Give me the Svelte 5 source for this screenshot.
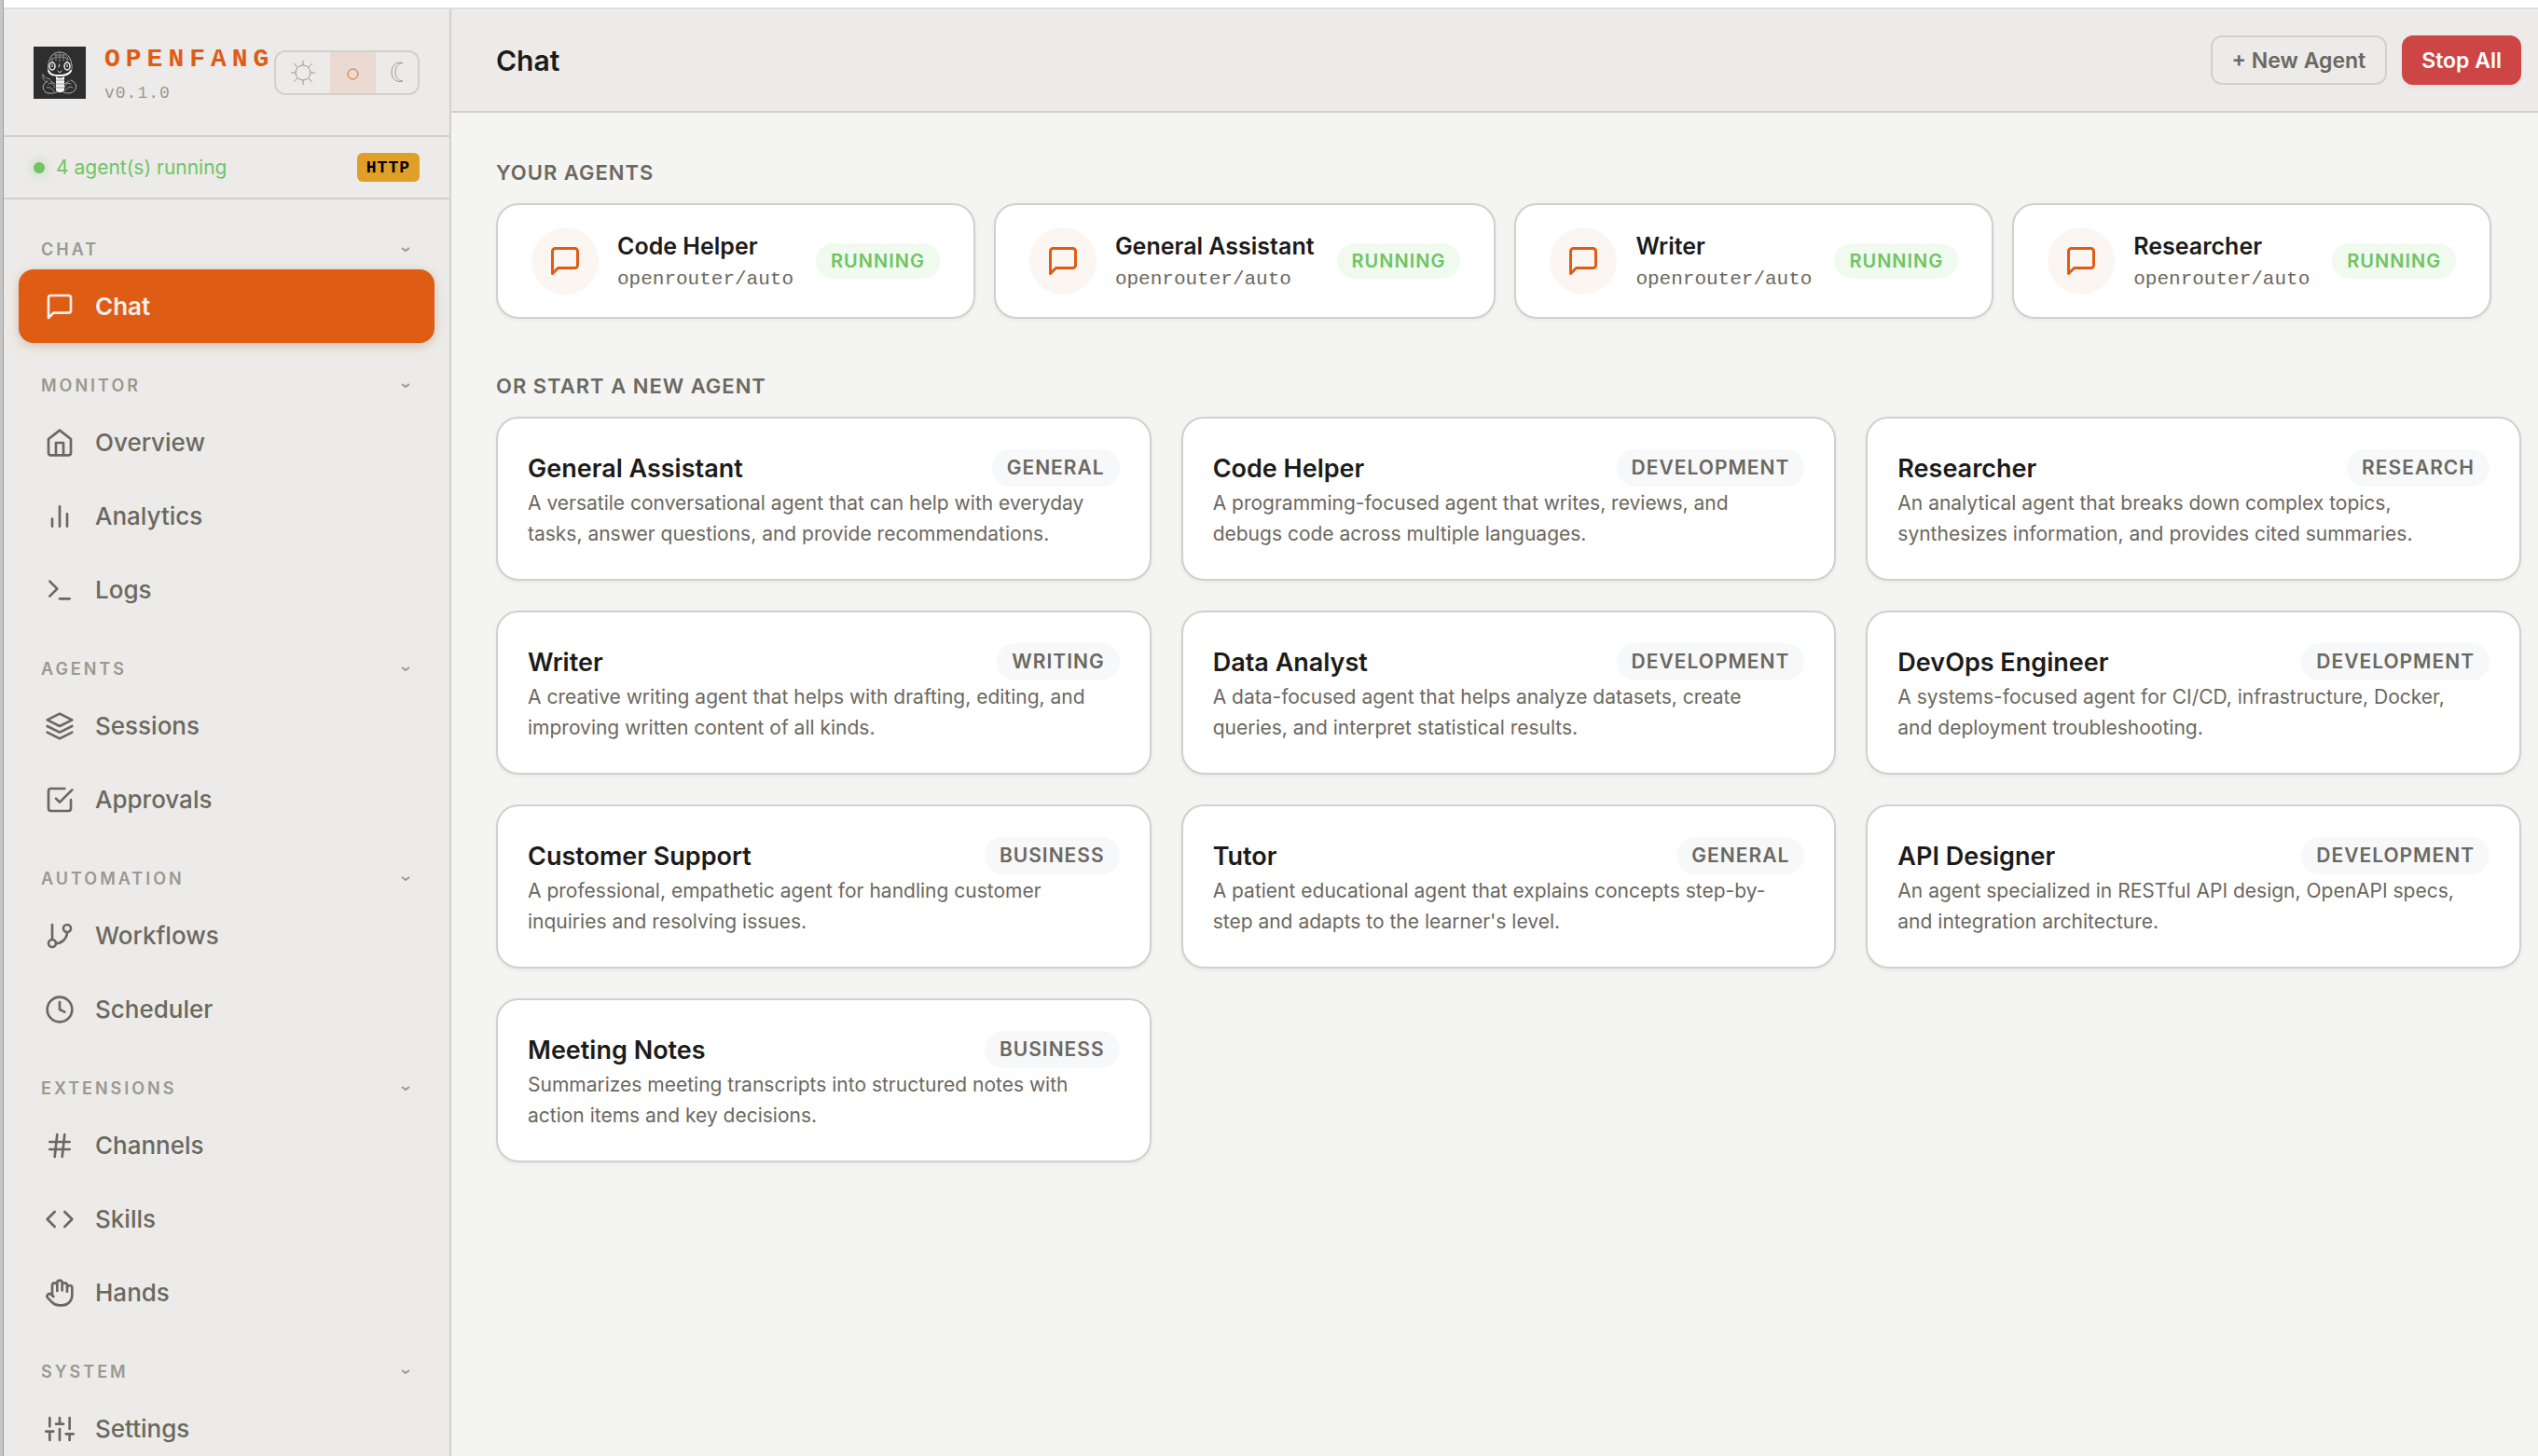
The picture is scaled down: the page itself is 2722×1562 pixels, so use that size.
<script lang="ts">
  interface NavItem {
    id: string;
    label: string;
    icon: string;
  }

  interface NavGroup {
    label: string;
    items: NavItem[];
  }

  const icons: Record<string, string> = {
    message: '<path d="M21 15a2 2 0 0 1-2 2H7l-4 4V5a2 2 0 0 1 2-2h14a2 2 0 0 1 2 2z"/>',
    home: '<path d="M3 9l9-7 9 7v11a2 2 0 0 1-2 2H5a2 2 0 0 1-2-2z"/><path d="M9 22V12h6v10"/>',
    chart: '<path d="M18 20V10M12 20V4M6 20v-6"/>',
    terminal: '<path d="M4 17l6-6-6-6M12 19h8"/>',
    layers: '<path d="M12 2L2 7l10 5 10-5-10-5z"/><path d="M2 17l10 5 10-5M2 12l10 5 10-5"/>',
    check: '<path d="M9 11l3 3L22 4"/><path d="M21 12v7a2 2 0 0 1-2 2H5a2 2 0 0 1-2-2V5a2 2 0 0 1 2-2h11"/>',
    branch: '<path d="M6 3v12"/><circle cx="18" cy="6" r="3"/><circle cx="6" cy="18" r="3"/><path d="M18 9a9 9 0 0 1-9 9"/>',
    clock: '<circle cx="12" cy="12" r="10"/><path d="M12 6v6l4 2"/>',
    hash: '<path d="M4 9h16M4 15h16M10 3L8 21M16 3l-2 18"/>',
    code: '<path d="M16 18l6-6-6-6M8 6l-6 6 6 6"/>',
    hand: '<path d="M18 11V6a2 2 0 0 0-4 0M14 10V4a2 2 0 0 0-4 0v2M10 10.5V6a2 2 0 0 0-4 0v8"/><path d="M18 8a2 2 0 1 1 4 0v6a8 8 0 0 1-8 8h-2c-2.8 0-4.5-.86-5.99-2.34l-3.6-3.6a2 2 0 0 1 2.83-2.82L7 15"/>',
    sliders: '<path d="M4 21v-7M4 10V3M12 21v-9M12 8V3M20 21v-5M20 12V3M1 14h6M9 8h6M17 16h6"/>',
  };

  const groups: NavGroup[] = [
    { label: 'Chat', items: [{ id: 'chat', label: 'Chat', icon: 'message' }] },
    {
      label: 'Monitor',
      items: [
        { id: 'overview', label: 'Overview', icon: 'home' },
        { id: 'analytics', label: 'Analytics', icon: 'chart' },
        { id: 'logs', label: 'Logs', icon: 'terminal' },
      ],
    },
    {
      label: 'Agents',
      items: [
        { id: 'sessions', label: 'Sessions', icon: 'layers' },
        { id: 'approvals', label: 'Approvals', icon: 'check' },
      ],
    },
    {
      label: 'Automation',
      items: [
        { id: 'workflows', label: 'Workflows', icon: 'branch' },
        { id: 'scheduler', label: 'Scheduler', icon: 'clock' },
      ],
    },
    {
      label: 'Extensions',
      items: [
        { id: 'channels', label: 'Channels', icon: 'hash' },
        { id: 'skills', label: 'Skills', icon: 'code' },
        { id: 'hands', label: 'Hands', icon: 'hand' },
      ],
    },
    { label: 'System', items: [{ id: 'settings', label: 'Settings', icon: 'sliders' }] },
  ];

  const agents = [
    { name: 'Code Helper', model: 'openrouter/auto' },
    { name: 'General Assistant', model: 'openrouter/auto' },
    { name: 'Writer', model: 'openrouter/auto' },
    { name: 'Researcher', model: 'openrouter/auto' },
  ];

  const templates = [
    { name: 'General Assistant', category: 'General', desc: 'A versatile conversational agent that can help with everyday tasks, answer questions, and provide recommendations.' },
    { name: 'Code Helper', category: 'Development', desc: 'A programming-focused agent that writes, reviews, and debugs code across multiple languages.' },
    { name: 'Researcher', category: 'Research', desc: 'An analytical agent that breaks down complex topics, synthesizes information, and provides cited summaries.' },
    { name: 'Writer', category: 'Writing', desc: 'A creative writing agent that helps with drafting, editing, and improving written content of all kinds.' },
    { name: 'Data Analyst', category: 'Development', desc: 'A data-focused agent that helps analyze datasets, create queries, and interpret statistical results.' },
    { name: 'DevOps Engineer', category: 'Development', desc: 'A systems-focused agent for CI/CD, infrastructure, Docker, and deployment troubleshooting.' },
    { name: 'Customer Support', category: 'Business', desc: 'A professional, empathetic agent for handling customer inquiries and resolving issues.' },
    { name: 'Tutor', category: 'General', desc: "A patient educational agent that explains concepts step-by-step and adapts to the learner's level." },
    { name: 'API Designer', category: 'Development', desc: 'An agent specialized in RESTful API design, OpenAPI specs, and integration architecture.' },
    { name: 'Meeting Notes', category: 'Business', desc: 'Summarizes meeting transcripts into structured notes with action items and key decisions.' },
  ];

  let page = $state('chat');
  let theme = $state('system');
  let collapsed = $state<Record<string, boolean>>({});

  function navigate(event: MouseEvent, id: string) {
    event.preventDefault();
    page = id;
  }
</script>

{#snippet icon(name: string)}
  <svg class="icon" viewBox="0 0 24 24" aria-hidden="true">{@html icons[name]}</svg>
{/snippet}

<div class="frame">
  <div class="shell">
    <aside class="sidebar">
      <div class="sidebar-header">
        <svg class="logo" viewBox="0 0 56 56" aria-hidden="true">
          <rect width="56" height="56" fill="#2e2e2e" />
          <g fill="none" stroke="#b4b4b4" stroke-linecap="round">
            <path d="M17 27c-3-4-1-9 0-12C19 8 23 6 28 6s10 3 12 9c1 4 2 8 0 12" />
            <path d="M19 14c4-4 15-4 19 0M24 8v7M28 7v9M32 8v7M20 12v5M36 11v6M22 9h12" stroke="#8c8c8c" />
            <path d="M15 37c-6 3-6 9-2 12 4 2 8 1 12 0M40 36c7 3 7 9 3 12-4 3-8 2-11 1" />
            <path d="M10 30c2 4 5 4 8 5M10 30c-1 5 2 7 4 8M16 40c4-2 6 1 7 4M14 44c4-1 6 1 8 4M40 40c-3-2-6 0-7 4M42 44c-3-2-6 0-8 3M18 37l5 3M38 37l-5 3" stroke="#a0a0a0" />
            <path d="M16 26c2 5 7 5 12 5s10-1 12-5" stroke="#ffffff" stroke-width="2" />
            <path d="M28 19l-1 3M26 26l2 2 2-2" stroke="#dddddd" />
          </g>
          <path d="M24 32c3 2 6 2 9 0v15c-2 3-7 3-9 0z" fill="#f4f4f4" />
          <path d="M24 36h9M24 40h9M24 44h9" stroke="#999999" />
          <g fill="#2e2e2e" stroke="#eeeeee" stroke-width="1.5">
            <ellipse cx="20" cy="21" rx="3" ry="4" />
            <ellipse cx="36" cy="21" rx="3" ry="4" />
          </g>
          <path d="M20 19v3M36 19v3" stroke="#ffffff" />
        </svg>
        <div class="brand">
          <div class="brand-name">OPENFANG</div>
          <div class="version">v0.1.0</div>
        </div>
        <div class="theme-switch" role="group" aria-label="Theme">
          <button type="button" aria-label="Light" class:active={theme === 'light'} onclick={() => (theme = 'light')}>
            <svg width="26" height="26" viewBox="0 0 26 26">
              <circle cx="13" cy="13" r="8" />
              <path d="M13 5V0M13 21v5M5 13H0M21 13h5M7 7L3 3M19 7l4-4M7 19l-4 4M19 19l4 4" />
            </svg>
          </button>
          <button type="button" aria-label="System" class:active={theme === 'system'} onclick={() => (theme = 'system')}>
            <svg width="17" height="26" viewBox="0 0 17 26"><circle cx="8.5" cy="14.5" r="5.5" /></svg>
          </button>
          <button type="button" aria-label="Dark" class:active={theme === 'dark'} onclick={() => (theme = 'dark')}>
            <svg width="13" height="26" viewBox="0 0 13 26">
              <path d="M13 2.5C6 .5 1 5.5 1 12.5S6 24 13 22C8 21.5 5 18 5 12.5S8 3 13 2.5z" />
            </svg>
          </button>
        </div>
      </div>

      <div class="status">
        <span class="status-dot"></span>
        <span class="status-text">4 agent(s) running</span>
        <span class="conn-badge">HTTP</span>
      </div>

      <nav class="nav">
        {#each groups as group}
          <div class="nav-group">
            <button
              type="button"
              class="nav-title"
              aria-expanded={!collapsed[group.label]}
              onclick={() => (collapsed[group.label] = !collapsed[group.label])}
            >
              <span>{group.label}</span>
              <svg class="chevron" viewBox="0 0 10 10" aria-hidden="true"><path d="M1 3l4 3 4-3" /></svg>
            </button>
            {#if !collapsed[group.label]}
              {#each group.items as item}
                <a
                  href="#{item.id}"
                  class="nav-item"
                  class:active={page === item.id}
                  onclick={(e) => navigate(e, item.id)}
                >
                  {@render icon(item.icon)}
                  <span>{item.label}</span>
                </a>
              {/each}
            {/if}
          </div>
        {/each}
      </nav>
    </aside>

    <main class="main">
      <header class="topbar">
        <h1>Chat</h1>
        <div class="actions">
          <button type="button" class="btn btn-ghost">+ New Agent</button>
          <button type="button" class="btn btn-danger">Stop All</button>
        </div>
      </header>

      <div class="content">
        <section>
          <h2>Your Agents</h2>
          <div class="agent-row">
            {#each agents as agent}
              <button type="button" class="agent-card">
                <span class="agent-icon">{@render icon('message')}</span>
                <span class="agent-text">
                  <span class="agent-name">{agent.name}</span>
                  <span class="agent-model">{agent.model}</span>
                </span>
                <span class="badge badge-running">Running</span>
              </button>
            {/each}
          </div>
        </section>

        <section>
          <h2>Or start a new agent</h2>
          <div class="template-grid">
            {#each templates as template}
              <button type="button" class="template-card">
                <span class="template-head">
                  <span class="template-name">{template.name}</span>
                  <span class="badge">{template.category}</span>
                </span>
                <span class="template-desc">{template.desc}</span>
              </button>
            {/each}
          </div>
        </section>
      </div>
    </main>
  </div>
</div>

<style>
  :global(body) {
    background: #f4f4f2;
  }

  .frame {
    --accent: #df5c15;
    --surface: #ecebe9;
    --line: #d1d0cd;
    --text: #1c1b1a;
    --dim: #6b6860;
    --muted: #9a988f;
    --green: #6fc464;
    --mono: 'Liberation Mono', monospace;
    box-sizing: border-box;
    height: 100vh;
    display: flex;
    overflow: hidden;
    padding-left: 1px;
    border-left: 3px solid #c6c6c6;
    background: #9e9e9e;
    color: var(--text);
    font-family: Inter, sans-serif;
    -webkit-font-smoothing: antialiased;
  }

  .frame :global(*) {
    box-sizing: border-box;
  }

  button {
    font-family: inherit;
    cursor: pointer;
  }

  .shell {
    flex: 1;
    min-width: 0;
    display: flex;
    border-top: 2px solid #dededd;
    margin-top: 8px;
    box-shadow: 0 -8px 0 #ffffff;
  }

  .icon {
    width: 32px;
    height: 32px;
    flex-shrink: 0;
    fill: none;
    stroke: currentColor;
    stroke-width: 2;
    stroke-linecap: round;
    stroke-linejoin: round;
  }

  /* Sidebar */
  .sidebar {
    width: 480px;
    flex-shrink: 0;
    display: flex;
    flex-direction: column;
    background: var(--surface);
    border-right: 2px solid var(--line);
  }

  .sidebar-header {
    display: flex;
    align-items: center;
    padding: 0 32px;
    height: 137px;
    flex-shrink: 0;
    border-bottom: 2px solid var(--line);
  }

  .logo {
    width: 56px;
    height: 56px;
    flex-shrink: 0;
    margin-right: 20px;
  }

  .brand {
    flex: 1;
    min-width: 0;
    padding-top: 4px;
    font-family: var(--mono);
  }

  .brand-name {
    color: var(--accent);
    font-size: 28px;
    font-weight: 700;
    line-height: 32px;
    letter-spacing: 6px;
  }

  .version {
    margin-top: 8px;
    color: var(--muted);
    font-size: 18px;
    line-height: 24px;
    letter-spacing: 1px;
  }

  .theme-switch {
    display: flex;
    flex-shrink: 0;
    height: 48px;
    border: 2px solid var(--line);
    border-radius: 12px;
    overflow: hidden;
  }

  .theme-switch button {
    display: flex;
    align-items: center;
    padding: 0 16px;
    border: none;
    background: transparent;
    color: var(--muted);
  }

  .theme-switch button.active {
    background: #ebdad1;
    color: var(--accent);
  }

  .theme-switch svg {
    fill: none;
    stroke: currentColor;
  }

  .status {
    display: flex;
    align-items: center;
    gap: 12px;
    height: 67px;
    flex-shrink: 0;
    padding: 0 32px;
    border-bottom: 2px solid var(--line);
    color: var(--green);
    font-size: 21px;
  }

  .status-dot {
    width: 12px;
    height: 12px;
    border-radius: 50%;
    background: var(--green);
    box-shadow: 0 0 12px rgba(111, 196, 100, 0.5);
  }

  .conn-badge {
    margin-left: auto;
    padding: 2px 10px 0;
    border-radius: 6px;
    background: #e0a028;
    color: #000000;
    font-family: var(--mono);
    font-size: 18px;
    font-weight: 700;
    line-height: 29px;
    letter-spacing: 1px;
  }

  .nav {
    flex: 1;
    min-height: 0;
    padding: 32px 16px;
    overflow-y: auto;
    scrollbar-width: none;
  }

  .nav-group {
    margin-bottom: 24px;
  }

  .nav-title {
    width: 100%;
    height: 43px;
    display: flex;
    align-items: center;
    justify-content: space-between;
    padding: 0 26px 0 24px;
    border: none;
    background: transparent;
    color: var(--muted);
    font-size: 18px;
    font-weight: 600;
    letter-spacing: 3px;
    text-transform: uppercase;
  }

  .chevron {
    width: 10px;
    height: 10px;
    fill: none;
    stroke: currentColor;
    stroke-width: 2;
  }

  .nav-item {
    display: flex;
    align-items: center;
    gap: 22px;
    height: 79px;
    padding: 0 28px;
    border-radius: 16px;
    color: var(--dim);
    font-size: 26px;
    font-weight: 500;
    text-decoration: none;
  }

  .nav-item.active {
    background: var(--accent);
    color: #f4f0ee;
    font-weight: 600;
    box-shadow: 0 2px 8px rgba(0, 0, 0, 0.1), 0 4px 16px rgba(223, 92, 21, 0.15);
  }

  /* Main */
  .main {
    flex: 1;
    min-width: 0;
    background: #f4f4f2;
  }

  .topbar {
    display: flex;
    align-items: center;
    justify-content: space-between;
    padding: 28px 18px 28px 48px;
    background: var(--surface);
    border-bottom: 2px solid var(--line);
  }

  h1 {
    margin: 0;
    font-size: 30px;
    font-weight: 600;
    line-height: 36px;
  }

  .actions {
    display: flex;
    gap: 16px;
  }

  .btn {
    height: 53px;
    padding: 0 21px;
    border: none;
    border-radius: 12px;
    font-size: 23px;
    font-weight: 600;
  }

  .btn-ghost {
    border: 2px solid var(--line);
    background: transparent;
    color: var(--dim);
  }

  .btn-danger {
    background: #cd4545;
    color: #ffffff;
    box-shadow: 0 2px 4px rgba(0, 0, 0, 0.06);
  }

  .content {
    padding: 48px 18px 48px 48px;
  }

  section + section {
    margin-top: 56px;
  }

  h2 {
    margin: 0 0 16px;
    color: var(--dim);
    font-size: 22px;
    font-weight: 600;
    line-height: 33px;
    letter-spacing: 1px;
    text-transform: uppercase;
  }

  .agent-row {
    display: flex;
    flex-wrap: wrap;
    gap: 20px;
  }

  .agent-card,
  .template-card {
    border: 2px solid var(--line);
    border-radius: 24px;
    background: #ffffff;
    color: var(--text);
    text-align: left;
    box-shadow: 0 2px 4px rgba(0, 0, 0, 0.05);
  }

  .agent-card {
    display: flex;
    align-items: center;
    gap: 20px;
    padding: 24px 36px;
  }

  .agent-icon {
    display: flex;
    align-items: center;
    justify-content: center;
    width: 72px;
    height: 72px;
    border-radius: 50%;
    background: #fcf6f2;
    color: var(--accent);
  }

  .agent-icon .icon {
    width: 36px;
    height: 36px;
  }

  .agent-text {
    display: flex;
    flex-direction: column;
    padding-right: 4px;
  }

  .agent-name {
    font-size: 25px;
    font-weight: 600;
    line-height: 40px;
  }

  .agent-model {
    color: var(--dim);
    font-family: var(--mono);
    font-size: 21px;
    line-height: 32px;
  }

  .badge {
    padding: 0 16px;
    border-radius: 20px;
    background: #f7f8fa;
    color: var(--dim);
    font-size: 21px;
    font-weight: 600;
    line-height: 40px;
    letter-spacing: 1px;
    text-transform: uppercase;
  }

  .badge-running {
    background: #f0faef;
    color: var(--green);
    font-size: 20px;
    line-height: 38px;
  }

  .template-grid {
    display: grid;
    grid-template-columns: repeat(3, minmax(0, 1fr));
    gap: 32px;
  }

  .template-card {
    display: flex;
    flex-direction: column;
    padding: 32px;
  }

  .template-head {
    display: flex;
    align-items: center;
    justify-content: space-between;
    width: 100%;
    min-height: 42px;
  }

  .template-name {
    font-size: 27px;
    font-weight: 600;
  }

  .template-desc {
    padding-right: 12px;
    color: var(--dim);
    font-size: 21px;
    line-height: 33px;
  }
</style>
